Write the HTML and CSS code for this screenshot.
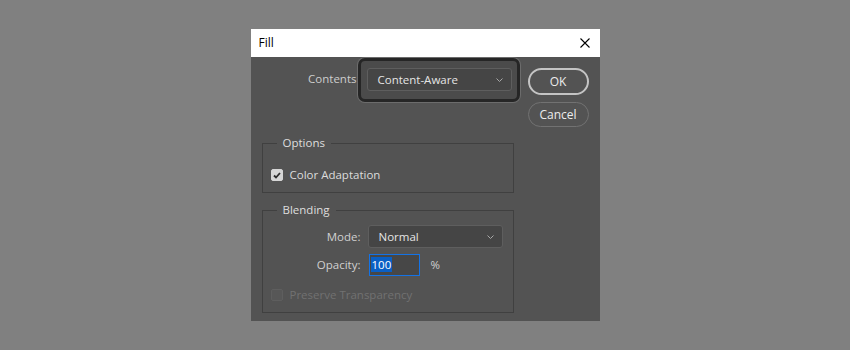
FILE: index.html
```html
<!DOCTYPE html>
<html lang="en">
<head>
<meta charset="utf-8">
<title>Fill</title>
<link rel="stylesheet" href="styles.css">
</head>
<body>
<div class="dialog">
  <div class="titlebar">
    <span class="title">Fill</span>
    <svg class="close" width="10" height="10" viewBox="0 0 10 10"><path d="M0.5 0.5L9.5 9.5M9.5 0.5L0.5 9.5" stroke="#000" stroke-width="1.1" fill="none"/></svg>
  </div>
  <div class="body">
    <div class="main">
      <div class="contents-row">
        <span class="row-label">Contents</span>
        <div class="focus-ring">
          <div class="select wide">
            <span>Content-Aware</span>
            <svg class="chev" width="7" height="4" viewBox="0 0 7 4"><path d="M0.5 0.5L3.5 3.5L6.5 0.5" stroke="#a8a8a8" fill="none"/></svg>
          </div>
        </div>
      </div>

      <div class="group options">
        <div class="legend">Options</div>
        <div class="check-row">
          <span class="check on"><svg width="8" height="7" viewBox="0 0 8 7"><path d="M1 3.5L3 5.5L7 1" stroke="#2c2c2c" stroke-width="1.8" fill="none"/></svg></span>
          <span>Color Adaptation</span>
        </div>
      </div>

      <div class="group blending">
        <div class="legend">Blending</div>
        <div class="field">
          <span class="field-label">Mode:</span>
          <div class="select mode">
            <span>Normal</span>
            <svg class="chev" width="7" height="4" viewBox="0 0 7 4"><path d="M0.5 0.5L3.5 3.5L6.5 0.5" stroke="#a8a8a8" fill="none"/></svg>
          </div>
        </div>
        <div class="field opacity">
          <span class="field-label">Opacity:</span>
          <div class="num"><span class="selected">100</span></div>
          <span class="unit">%</span>
        </div>
        <div class="check-row disabled">
          <span class="check"></span>
          <span>Preserve Transparency</span>
        </div>
      </div>
    </div>

    <div class="side">
      <button class="btn primary">OK</button>
      <button class="btn">Cancel</button>
    </div>
  </div>
</div>
</body>
</html>
```

FILE: styles.css
```css
*{ margin:0; padding:0; box-sizing:border-box;}
body{ background:#808080; font:11.5px/16px "Open Sans","Noto Sans",sans-serif; color:#d8d8d8;}

.dialog{ width:349px; margin:29px auto 0;}
.titlebar{ height:28px; background:#fff; display:flex; align-items:center; justify-content:space-between; padding:0 10px 0 8px; color:#000;}
.title{ font-size:12px;}
.close{ display:block;}

.body{ height:264px; background:#535353; display:grid; grid-template-columns:252px 61px; column-gap:14px; padding:0 11px;}

/* contents select with focus ring */
.contents-row{ display:flex; justify-content:flex-end; align-items:center; margin-right:-6px; margin-top:1px;}
.row-label{ color:#cdcdcd; margin-right:1px; margin-top:-2px;}
.focus-ring{ width:162px; height:44px; border:3px solid #262626; border-radius:7px; box-shadow:0 0 0 1px #6c6c6c; background:#4b4b4b; padding:7px 0 0 6px;}

.select{ height:23px; background:#454545; border:1px solid #5e5e5e; border-radius:3px; display:flex; align-items:center; justify-content:space-between; padding:0 8px 0 10px; color:#e4e4e4;}
.select.wide{ width:145px;}
.select.mode{ width:135px;}
.chev{ display:block;}

/* group boxes */
.group{ border:1px solid #404040; padding:0 8px;}
.options{ margin-top:41px; height:50px;}
.blending{ margin-top:17px; height:103px;}
.legend{ width:fit-content; margin:-9px 0 0 6px; padding:0 6px; background:#535353; color:#dedede;}

.check-row{ display:flex; align-items:center; gap:7px; height:16px; color:#dcdcdc;}
.options .check-row{ margin-top:16px;}
.check{ width:12px; height:12px; border-radius:2px; border:1px solid #5e5e5e; background:#575757; display:flex; align-items:center; justify-content:center;}
.check.on{ background:#d6d6d6; border-color:#d6d6d6;}
.check-row.disabled{ margin-top:11px; color:#717171;}

.field{ display:grid; grid-template-columns:98px auto auto; column-gap:7px; align-items:center; justify-content:start; margin-left:-8px; margin-top:7px; color:#d0d0d0;}
.field.opacity{ margin-top:6px;}
.field-label{ text-align:right;}
.num{ width:51px; height:22px; margin-left:1px; border:1px solid #1473e6; background:#474747; padding:2px 0 0 1px;}
.selected{ display:inline-block; background:#0a5fc4; color:#fff; line-height:15px; padding:0 1px;}
.unit{ margin-left:4px;}

/* buttons */
.side{ display:flex; flex-direction:column;}
.btn{ font:12px "Open Sans","Noto Sans",sans-serif; color:#ececec; background:#535353; border-radius:14px; width:61px;}
.btn.primary{ margin-top:11px; height:27px; border:2px solid #c4c4c4;}
.btn:not(.primary){ margin-top:7px; height:25px; border:1.5px solid #727272;}
```
